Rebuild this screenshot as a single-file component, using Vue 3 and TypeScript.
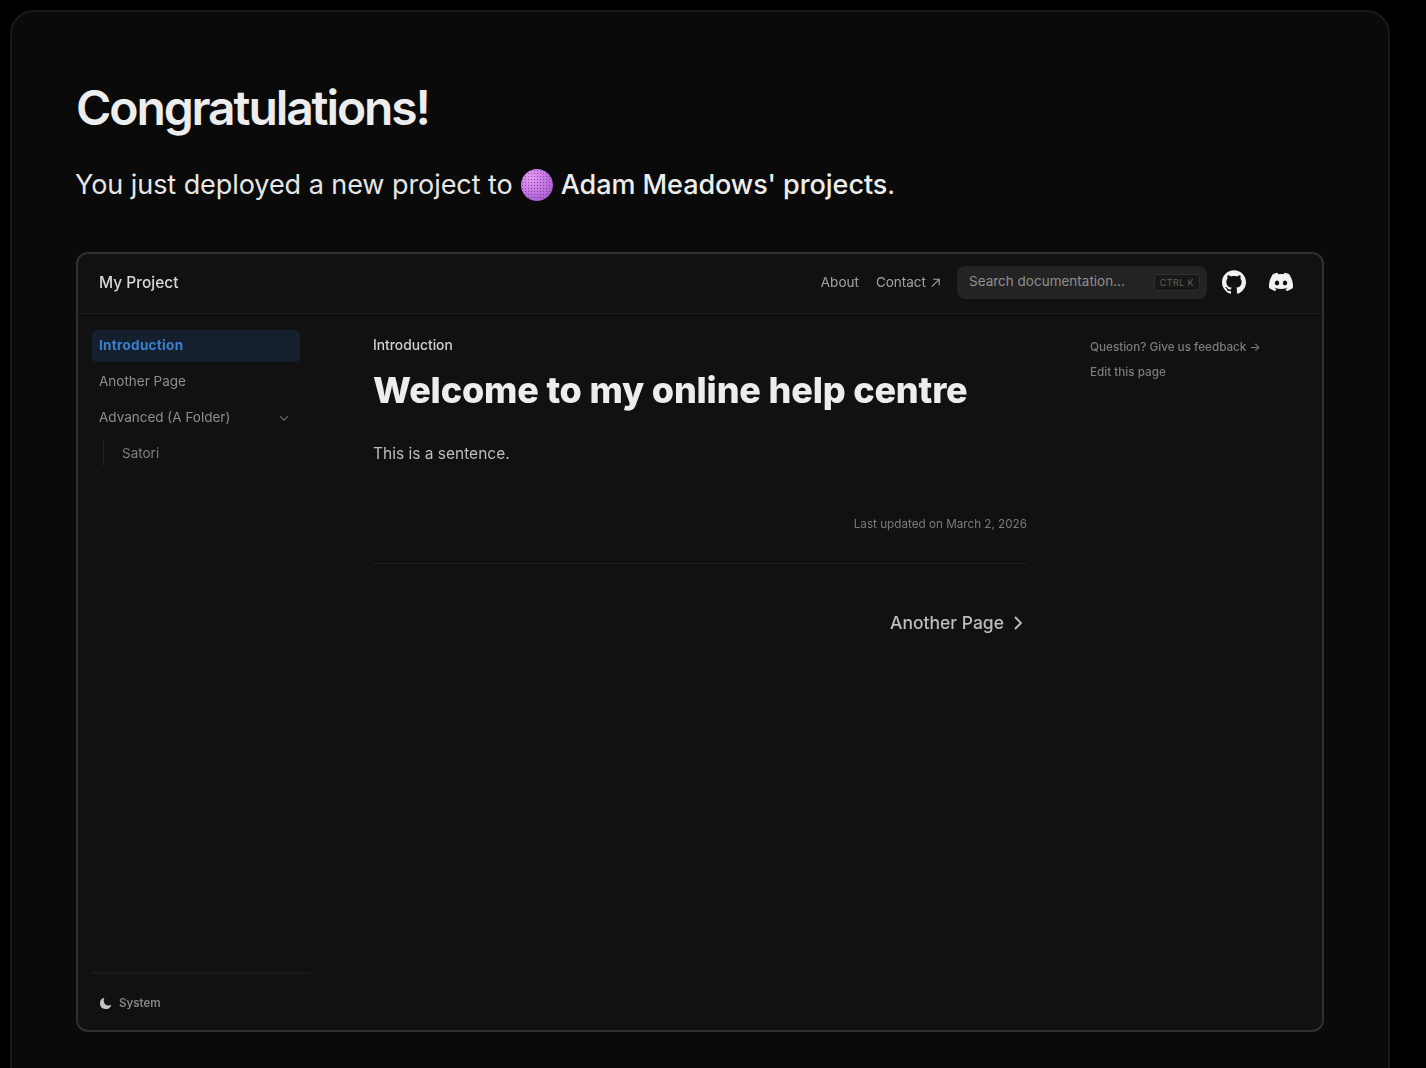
<script setup lang="ts">
const sideLinks = ['Another Page'];
</script>

<template>
  <div class="page">
    <section class="card">
      <h1 class="title">Congratulations!</h1>
      <p class="lead">
        <span>You just deployed a new project to</span>
        <span class="avatar" />
        <strong>Adam Meadows' projects</strong><span>.</span>
      </p>

      <div class="shot">
        <header class="topbar">
          <span class="brand">My Project</span>
          <nav class="topnav">
            <span>About</span>
            <span class="contact">Contact
              <svg width="11" height="11" viewBox="0 0 12 12" fill="none" stroke="currentColor" stroke-width="1.2"><path d="M2 10.5 10 2.5M3.5 2.5H10V9" /></svg>
            </span>
          </nav>
          <div class="search">
            <span>Search documentation...</span>
            <kbd class="kbd">CTRL K</kbd>
          </div>
          <svg class="gh" width="24" height="24" viewBox="0 0 24 24" fill="#f1f1f1"><path d="M12 .297c-6.63 0-12 5.373-12 12 0 5.303 3.438 9.8 8.205 11.385.6.113.82-.258.82-.577 0-.285-.01-1.04-.015-2.04-3.338.724-4.042-1.61-4.042-1.61C4.422 18.07 3.633 17.7 3.633 17.7c-1.087-.744.084-.729.084-.729 1.205.084 1.838 1.236 1.838 1.236 1.07 1.835 2.809 1.305 3.495.998.108-.776.417-1.305.76-1.605-2.665-.3-5.466-1.332-5.466-5.93 0-1.31.465-2.38 1.235-3.22-.135-.303-.54-1.523.105-3.176 0 0 1.005-.322 3.3 1.23.96-.267 1.98-.399 3-.405 1.02.006 2.04.138 3 .405 2.28-1.552 3.285-1.23 3.285-1.23.645 1.653.24 2.873.12 3.176.765.84 1.23 1.91 1.23 3.22 0 4.61-2.805 5.625-5.475 5.92.42.36.81 1.096.81 2.22 0 1.606-.015 2.896-.015 3.286 0 .315.21.69.825.57C20.565 22.092 24 17.592 24 12.297c0-6.627-5.373-12-12-12" /></svg>
          <svg class="dc" width="24" height="24" viewBox="0 0 24 24" fill="#f1f1f1"><path d="M20.317 4.3698a19.7913 19.7913 0 00-4.8851-1.5152.0741.0741 0 00-.0785.0371c-.211.3753-.4447.8648-.6083 1.2495-1.8447-.2762-3.68-.2762-5.4868 0-.1636-.3933-.4058-.8742-.6177-1.2495a.077.077 0 00-.0785-.037 19.7363 19.7363 0 00-4.8852 1.515.0699.0699 0 00-.0321.0277C.5334 9.0458-.319 13.5799.0992 18.0578a.0824.0824 0 00.0312.0561c2.0528 1.5076 4.0413 2.4228 5.9929 3.0294a.0777.0777 0 00.0842-.0276c.4616-.6304.8731-1.2952 1.226-1.9942a.076.076 0 00-.0416-.1057c-.6528-.2476-1.2743-.5495-1.8722-.8923a.077.077 0 01-.0076-.1277c.1258-.0943.2517-.1923.3718-.2914a.0743.0743 0 01.0776-.0105c3.9278 1.7933 8.18 1.7933 12.0614 0a.0739.0739 0 01.0785.0095c.1202.099.246.1981.3728.2924a.077.077 0 01-.0066.1276 12.2986 12.2986 0 01-1.873.8914.0766.0766 0 00-.0407.1067c.3604.698.7719 1.3628 1.225 1.9932a.076.076 0 00.0842.0286c1.961-.6067 3.9495-1.5219 6.0023-3.0294a.077.077 0 00.0313-.0552c.5004-5.177-.8382-9.6739-3.5485-13.6604a.061.061 0 00-.0312-.0286zM8.02 15.3312c-1.1825 0-2.1569-1.0857-2.1569-2.419 0-1.3332.9555-2.4189 2.157-2.4189 1.2108 0 2.1757 1.0952 2.1568 2.419 0 1.3332-.9555 2.4189-2.1569 2.4189zm7.9748 0c-1.1825 0-2.1569-1.0857-2.1569-2.419 0-1.3332.9554-2.4189 2.1569-2.4189 1.2108 0 2.1757 1.0952 2.1568 2.419 0 1.3332-.946 2.4189-2.1568 2.4189Z" /></svg>
        </header>

        <div class="body">
          <aside class="sidebar">
            <div class="side-top">
              <div class="side-item active">Introduction</div>
              <div v-for="link in sideLinks" :key="link" class="side-item">{{ link }}</div>
              <div class="side-item folder">
                <span>Advanced (A Folder)</span>
                <svg width="12" height="12" viewBox="0 0 12 12" fill="none" stroke="currentColor" stroke-width="1.1"><path d="M2 4.2 6 8.2l4-4" /></svg>
              </div>
              <div class="sub"><span>Satori</span></div>
            </div>
            <div class="side-foot">
              <svg width="13" height="13" viewBox="0 0 24 24" fill="#c4c4c4"><path d="M10 1.5a10.5 10.5 0 1 0 12.5 12.6c-1.3.9-3 1.4-4.7 1.4A9 9 0 0 1 10 1.5z" /></svg>
              <span>System</span>
            </div>
          </aside>

          <main class="article">
            <div class="crumb">Introduction</div>
            <h2 class="headline">Welcome to my online help centre</h2>
            <p class="sentence">This is a sentence.</p>
            <div class="updated">Last updated on March 2, 2026</div>
            <div class="pager">
              <span>Another Page</span>
              <svg width="16" height="16" viewBox="0 0 16 16" fill="none" stroke="currentColor" stroke-width="1.8"><path d="m5 2 6 6-6 6" /></svg>
            </div>
          </main>

          <aside class="toc">
            <div>Question? Give us feedback →</div>
            <div>Edit this page</div>
          </aside>
        </div>
      </div>
    </section>
  </div>
</template>

<style>
html, body { margin: 0; background: #000; overflow: hidden; }
</style>

<style scoped>
.page {
  height: 1068px;
  padding: 10px 36px 0 10px;
  box-sizing: border-box;
  overflow: hidden;
  background: #000;
  font-family: Inter, "Noto Sans", sans-serif;
}

.card {
  height: 1100px;
  box-sizing: border-box;
  padding: 64px 64px 0 64px;
  background: #0a0a0a;
  border: 2px solid #1a1a1a;
  border-radius: 24px;
}

.title {
  margin: 0;
  font-size: 48px;
  line-height: 64px;
  font-weight: 600;
  letter-spacing: -2.1px;
  color: #ededed;
}

.lead {
  margin: 25px 0 0 -1px;
  font-size: 27px;
  line-height: 40px;
  letter-spacing: -0.06px;
  font-weight: 400;
  color: #e6e6e6;
  display: flex;
  align-items: center;
  white-space: pre;
}
.lead strong { font-weight: 500; color: #ededed; }

.avatar {
  width: 32px;
  height: 32px;
  margin: 0 8px;
  border-radius: 50%;
  flex: none;
  background:
    radial-gradient(circle, rgba(80,20,120,.55) 0.8px, transparent 1px) 0 0 / 3px 3px,
    radial-gradient(circle at 30% 25%, #e79cf5, #a45ad0 85%);
}

.shot {
  margin-top: 47px;
  height: 780px;
  box-sizing: border-box;
  background: #111;
  border: 2px solid #303030;
  border-radius: 12px;
  overflow: hidden;
  display: flex;
  flex-direction: column;
  filter: blur(0.7px);
}

.topbar {
  height: 60px;
  flex: none;
  box-sizing: border-box;
  display: flex;
  align-items: center;
  padding: 0 29px 3px 21px;
  border-bottom: 1px solid #202020;
  color: #a3a3a3;
  font-size: 13.5px;
}

.brand { font-size: 15.5px; font-weight: 500; color: #d8d8d8; margin-right: auto; }

.topnav { display: flex; gap: 17px; align-items: center; margin-right: 16px; }
.contact { display: flex; align-items: center; gap: 4px; }

.search {
  width: 250px;
  height: 33px;
  box-sizing: border-box;
  padding: 0 7px 3px 12px;
  background: #232323;
  border-radius: 8px;
  display: flex;
  align-items: center;
  justify-content: space-between;
  color: #8f8f8f;
}

.kbd {
  font-family: Inter, sans-serif;
  font-size: 9px;
  letter-spacing: 0.4px;
  padding: 2px 5px;
  margin-top: 3px;
  color: #5f5f5f;
  background: #181818;
  border: 1px solid #303030;
  border-radius: 3px;
}

.gh { margin-left: 15px; }
.dc { margin-left: 23px; }

.body {
  flex: 1;
  display: grid;
  grid-template-columns: 232px 1fr 232px;
  min-height: 0;
}

.sidebar {
  display: flex;
  flex-direction: column;
  justify-content: space-between;
  padding: 16px 0 0 14px;
  color: #8e8e8e;
  font-size: 13.5px;
}

.side-top { width: 208px; display: flex; flex-direction: column; gap: 4px; }

.side-item {
  height: 32px;
  box-sizing: border-box;
  padding: 0 7px 3px;
  display: flex;
  align-items: center;
  border-radius: 5px;
}
.side-item.active { background: #14202d; color: #3a7fd0; font-weight: 700; letter-spacing: 0.3px; }
.folder { justify-content: space-between; }
.folder svg { color: #6f6f6f; margin: 3px 3px 0 0; }

.sub {
  margin: 2px 0 0 11px;
  padding: 0 0 0 18px;
  height: 26px;
  line-height: 26px;
  border-left: 1px solid #222;
  color: #7f7f7f;
}

.side-foot {
  height: 58px;
  box-sizing: border-box;
  display: flex;
  align-items: center;
  gap: 7px;
  padding: 2px 0 0 7px;
  border-top: 2px solid #1a1a1a;
  font-size: 11.5px;
  font-weight: 600;
  color: #858585;
}

.article { padding: 21px 63px 0 63px; }

.crumb { font-size: 13.8px; line-height: 20px; font-weight: 500; color: #d0d0d0; }

.headline {
  margin: 13px 0 0;
  font-size: 36px;
  line-height: 44px;
  font-weight: 800;
  letter-spacing: -0.17px;
  color: #ededed;
}

.sentence { margin: 31px 0 0; font-size: 15.5px; line-height: 22px; color: #bdbdbd; }

.updated {
  margin-top: 50px;
  padding-bottom: 30px;
  border-bottom: 1px solid #1f1f1f;
  text-align: right;
  font-size: 11.7px;
  line-height: 18px;
  color: #7c7c7c;
}

.pager {
  margin-top: 48px;
  display: flex;
  justify-content: flex-end;
  align-items: center;
  gap: 6px;
  padding-right: 1px;
  font-size: 17.5px;
  font-weight: 500;
  color: #bdbdbd;
}

.toc {
  padding: 24px 0 0 0;
  display: flex;
  flex-direction: column;
  gap: 7px;
  font-size: 11.7px;
  line-height: 18px;
  font-weight: 500;
  color: #7c7c7c;
}
</style>
